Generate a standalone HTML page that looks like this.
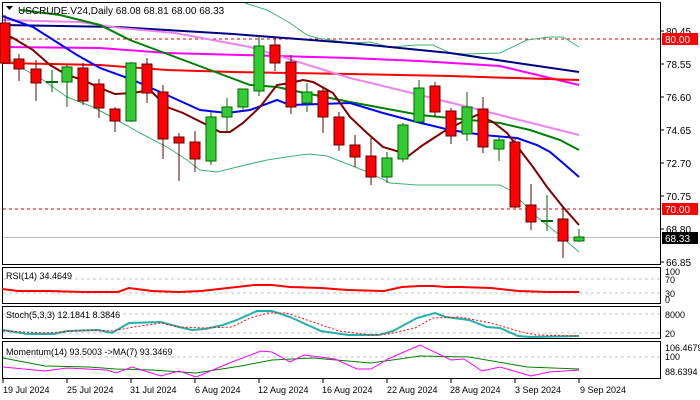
<!DOCTYPE html>
<html><head><meta charset="utf-8"><style>
html,body{margin:0;padding:0;background:#fff;}
svg{display:block;font-family:"Liberation Sans",sans-serif;}
</style></head><body>
<svg width="700" height="400" viewBox="0 0 700 400" xmlns="http://www.w3.org/2000/svg">
<rect width="700" height="400" fill="#fff"/>
<!-- main panel -->
<rect x="2.5" y="2.5" width="658" height="262" fill="none" stroke="#000"/>
<line x1="3" y1="39" x2="660" y2="39" stroke="#d00" stroke-dasharray="3,3"/>
<line x1="3" y1="209" x2="660" y2="209" stroke="#d00" stroke-dasharray="3,3"/>
<line x1="3" y1="237.5" x2="660" y2="237.5" stroke="#c0c0c0"/>
<!-- bollinger -->
<polyline fill="none" stroke="#3cb371" stroke-width="1" points="245,3 267,10 290,23 307,35 317,38 350,43 370,42 390,47 417,45 433,45 450,53 467,54 500,53 527,40 550,37 563,37 579,47"/>
<polyline fill="none" stroke="#3cb371" stroke-width="1" points="3,55 20,67 43,80 67,97 93,107 117,120 140,133 167,147 187,160 200,170 217,172 233,168 267,160 300,155 310,154 327,156 350,165 370,173 390,183 417,185 450,185 500,185 510,190 523,203 537,217 557,233 579,252"/>
<!-- MAs -->
<polyline fill="none" stroke="#000080" stroke-width="2" points="3,25 117,27 233,34 350,43 450,53 517,63 579,72"/>
<polyline fill="none" stroke="#ff00ff" stroke-width="2" points="3,47 100,48 167,53 350,58 420,61 500,66 579,85"/>
<polyline fill="none" stroke="#ff0000" stroke-width="2" points="3,63 100,65 167,70 233,72 350,74 450,76 579,80"/>
<polyline fill="none" stroke="#ee82ee" stroke-width="2" points="3,20 80,22 120,28 175,33 250,47 350,78 420,95 480,110 579,135"/>
<polyline fill="none" stroke="#008000" stroke-width="2" points="20,10 60,15 100,25 130,40 170,55 210,70 250,85 277,87 300,92 350,102 420,115 450,118 500,123 530,130 560,140 579,150"/>
<polyline fill="none" stroke="#0000ff" stroke-width="2" points="2,16 33,27 77,55 100,68 133,80 167,95 200,110 227,113 250,110 277,100 290,105 350,103 383,113 417,122 450,130 483,135 517,138 537,145 550,152 563,163 579,177"/>
<polyline fill="none" stroke="#800000" stroke-width="2" points="3,33 13,38 33,50 50,65 67,75 83,80 100,88 115,94 133,93 150,90 167,107 183,113 207,125 220,132 230,132 243,123 260,107 277,85 290,83 303,80 313,82 333,93 350,117 367,133 383,147 400,152 407,157 423,145 443,132 460,123 477,115 493,122 507,133 520,150 533,167 547,187 563,207 579,225"/>
<!-- candles -->
<g stroke="#600" stroke-width="1">
<line x1="5" y1="15" x2="5" y2="63"/><rect x="0" y="23" width="10" height="40" fill="#f00"/>
<line x1="19" y1="54" x2="19" y2="81"/><rect x="14" y="59" width="10" height="10" fill="#f00"/>
<line x1="36" y1="60" x2="36" y2="101"/><rect x="31" y="69" width="10" height="14" fill="#f00"/>
<line x1="52" y1="70" x2="52" y2="92" stroke="#060"/><line x1="46" y1="82" x2="58" y2="82" stroke="#060" stroke-width="2"/>
<line x1="67" y1="65" x2="67" y2="107" stroke="#060"/><rect x="62" y="67" width="10" height="15" fill="#32cd32" stroke="#060"/>
<line x1="83" y1="63" x2="83" y2="105"/><rect x="78" y="68" width="10" height="33" fill="#f00"/>
<line x1="99" y1="79" x2="99" y2="118"/><rect x="94" y="84" width="10" height="24" fill="#f00"/>
<line x1="115" y1="107" x2="115" y2="132"/><rect x="110" y="109" width="10" height="12" fill="#f00"/>
<line x1="131" y1="62" x2="131" y2="122" stroke="#060"/><rect x="126" y="63" width="10" height="58" fill="#32cd32" stroke="#060"/>
<line x1="147" y1="58" x2="147" y2="103"/><rect x="142" y="64" width="10" height="29" fill="#f00"/>
<line x1="163" y1="85" x2="163" y2="159"/><rect x="158" y="92" width="10" height="47" fill="#f00"/>
<line x1="179" y1="133" x2="179" y2="181"/><rect x="174" y="137" width="10" height="6" fill="#f00"/>
<line x1="195" y1="131" x2="195" y2="172"/><rect x="190" y="142" width="10" height="17" fill="#f00"/>
<line x1="211" y1="112" x2="211" y2="165" stroke="#060"/><rect x="206" y="117" width="10" height="44" fill="#32cd32" stroke="#060"/>
<line x1="227" y1="98" x2="227" y2="132" stroke="#060"/><rect x="222" y="107" width="10" height="10" fill="#32cd32" stroke="#060"/>
<line x1="243" y1="89" x2="243" y2="111" stroke="#060"/><rect x="238" y="89" width="10" height="18" fill="#32cd32" stroke="#060"/>
<line x1="259" y1="36" x2="259" y2="96" stroke="#060"/><rect x="254" y="46" width="10" height="45" fill="#32cd32" stroke="#060"/>
<line x1="275" y1="37" x2="275" y2="71"/><rect x="270" y="45" width="10" height="18" fill="#f00"/>
<line x1="291" y1="55" x2="291" y2="114"/><rect x="286" y="62" width="10" height="45" fill="#f00"/>
<line x1="307" y1="83" x2="307" y2="112" stroke="#060"/><rect x="302" y="92" width="10" height="11" fill="#32cd32" stroke="#060"/>
<line x1="323" y1="88" x2="323" y2="133"/><rect x="318" y="91" width="10" height="26" fill="#f00"/>
<line x1="339" y1="112" x2="339" y2="151"/><rect x="334" y="117" width="10" height="28" fill="#f00"/>
<line x1="355" y1="135" x2="355" y2="167"/><rect x="350" y="145" width="10" height="12" fill="#f00"/>
<line x1="371" y1="138" x2="371" y2="185"/><rect x="366" y="156" width="10" height="21" fill="#f00"/>
<line x1="387" y1="152" x2="387" y2="183" stroke="#060"/><rect x="382" y="158" width="10" height="19" fill="#32cd32" stroke="#060"/>
<line x1="403" y1="123" x2="403" y2="162" stroke="#060"/><rect x="398" y="125" width="10" height="34" fill="#32cd32" stroke="#060"/>
<line x1="419" y1="80" x2="419" y2="122" stroke="#060"/><rect x="414" y="88" width="10" height="34" fill="#32cd32" stroke="#060"/>
<line x1="435" y1="82" x2="435" y2="117"/><rect x="430" y="86" width="10" height="26" fill="#f00"/>
<line x1="451" y1="108" x2="451" y2="144"/><rect x="446" y="111" width="10" height="25" fill="#f00"/>
<line x1="467" y1="92" x2="467" y2="141" stroke="#060"/><rect x="462" y="107" width="10" height="27" fill="#32cd32" stroke="#060"/>
<line x1="483" y1="97" x2="483" y2="153"/><rect x="478" y="109" width="10" height="38" fill="#f00"/>
<line x1="499" y1="137" x2="499" y2="161" stroke="#060"/><rect x="494" y="140" width="10" height="9" fill="#32cd32" stroke="#060"/>
<line x1="515" y1="137" x2="515" y2="208"/><rect x="510" y="142" width="10" height="65" fill="#f00"/>
<line x1="531" y1="184" x2="531" y2="230"/><rect x="526" y="205" width="10" height="17" fill="#f00"/>
<line x1="547" y1="195" x2="547" y2="231" stroke="#060"/><line x1="541" y1="221" x2="553" y2="221" stroke="#060" stroke-width="2"/>
<line x1="563" y1="207" x2="563" y2="258"/><rect x="558" y="219" width="10" height="22" fill="#f00"/>
<line x1="579" y1="229" x2="579" y2="242" stroke="#060"/><rect x="574" y="237" width="10" height="4" fill="#32cd32" stroke="#060"/>
</g>
<!-- title -->
<path d="M6,6 L13,6 L9.5,10 Z" fill="#000"/>
<text x="18" y="14" font-size="10" fill="#000">USCRUDE.V24,Daily  68.08 68.81 68.00 68.33</text>
<!-- price axis -->
<g font-size="10" fill="#000">
<line x1="661" y1="31" x2="664" y2="31" stroke="#000"/><text x="666" y="35">80.45</text>
<line x1="661" y1="64" x2="664" y2="64" stroke="#000"/><text x="666" y="68">78.55</text>
<line x1="661" y1="97" x2="664" y2="97" stroke="#000"/><text x="666" y="101">76.60</text>
<line x1="661" y1="130" x2="664" y2="130" stroke="#000"/><text x="666" y="134">74.65</text>
<line x1="661" y1="163" x2="664" y2="163" stroke="#000"/><text x="666" y="167">72.70</text>
<line x1="661" y1="196" x2="664" y2="196" stroke="#000"/><text x="666" y="200">70.75</text>
<line x1="661" y1="229" x2="664" y2="229" stroke="#000"/><text x="666" y="233">68.80</text>
<line x1="661" y1="262" x2="664" y2="262" stroke="#000"/><text x="666" y="266">66.85</text>
<rect x="662" y="33" width="36" height="12" fill="#f00"/><text x="665" y="43" fill="#fff">80.00</text>
<rect x="662" y="203" width="36" height="12" fill="#f00"/><text x="665" y="213" fill="#fff">70.00</text>
<rect x="662" y="232" width="36" height="12" fill="#000"/><text x="665" y="242" fill="#fff">68.33</text>
</g>
<!-- RSI -->
<rect x="2.5" y="267.5" width="658" height="36" fill="none" stroke="#000"/>
<line x1="3" y1="279" x2="660" y2="279" stroke="#c0c0c0" stroke-dasharray="3,3"/>
<line x1="3" y1="293" x2="660" y2="293" stroke="#c0c0c0" stroke-dasharray="3,3"/>
<polyline fill="none" stroke="#f00" stroke-width="2" points="2,289 18,291 49,291 85,292 118,292 129,288 152,291 179,292 201,291 228,288 254,285 272,285 290,287 321,288 348,290 384,291 402,287 420,286 433,286 446,287 460,287 491,288 518,291 549,292 579,292"/>
<text x="6" y="279" font-size="9">RSI(14) 34.4649</text>
<g font-size="9"><text x="665" y="275">100</text><text x="665" y="283">70</text><text x="665" y="297">30</text><text x="665" y="303">0</text></g>
<!-- Stoch -->
<rect x="2.5" y="306.5" width="658" height="32" fill="none" stroke="#000"/>
<line x1="3" y1="314" x2="660" y2="314" stroke="#c0c0c0" stroke-dasharray="3,3"/>
<line x1="3" y1="333" x2="660" y2="333" stroke="#c0c0c0" stroke-dasharray="3,3"/>
<polyline fill="none" stroke="#20b2aa" stroke-width="2" points="3,330 27,334 54,334 67,331 98,330 112,333 129,323 161,322 179,327 192,330 205,329 223,325 237,320 257,311 272,311 290,317 321,331 348,335 379,335 393,331 417,318 435,313 446,317 469,320 487,327 500,328 518,336 531,337 579,336"/>
<polyline fill="none" stroke="#f00" stroke-width="1" stroke-dasharray="2,2" points="3,331 45,333 89,330 112,331 134,327 161,323 179,327 205,328 232,327 250,318 268,313 286,313 313,322 339,331 371,335 388,334 415,328 433,318 460,317 491,323 518,331 536,335 579,336"/>
<text x="6" y="318" font-size="9">Stoch(5,3,3) 12.1841 8.3846</text>
<g font-size="9"><text x="665" y="318">8000</text><text x="665" y="337">20</text></g>
<!-- Momentum -->
<rect x="2.5" y="341.5" width="658" height="37" fill="none" stroke="#000"/>
<line x1="3" y1="357" x2="660" y2="357" stroke="#c0c0c0" stroke-dasharray="3,3"/>
<polyline fill="none" stroke="#008000" stroke-width="1" points="3,358 45,366 89,367 116,369 152,370 196,373 241,366 272,360 313,358 371,363 420,356 469,357 527,367 579,369"/>
<polyline fill="none" stroke="#ff00ff" stroke-width="1" points="3,367 45,371 67,368 107,370 116,373 132,367 161,376 179,371 196,377 232,362 261,351 272,352 290,362 304,355 335,359 357,369 371,369 388,359 420,345 451,360 464,359 482,371 500,367 531,376 549,372 579,370"/>
<text x="6" y="355" font-size="9">Momentum(14) 93.5003  -&gt;MA(7) 93.3469</text>
<g font-size="9"><text x="665" y="351">106.4679</text><text x="665" y="360">100</text><text x="665" y="375">88.6394</text></g>
<!-- dates -->
<g stroke="#000"><line x1="3" y1="379" x2="3" y2="383"/><line x1="67" y1="379" x2="67" y2="383"/><line x1="131" y1="379" x2="131" y2="383"/><line x1="195" y1="379" x2="195" y2="383"/><line x1="259" y1="379" x2="259" y2="383"/><line x1="323" y1="379" x2="323" y2="383"/><line x1="387" y1="379" x2="387" y2="383"/><line x1="451" y1="379" x2="451" y2="383"/><line x1="515" y1="379" x2="515" y2="383"/><line x1="579" y1="379" x2="579" y2="383"/></g>
<g font-size="9"><text x="3" y="393">19 Jul 2024</text><text x="67" y="393">25 Jul 2024</text><text x="130" y="393">31 Jul 2024</text><text x="195" y="393">6 Aug 2024</text><text x="258" y="393">12 Aug 2024</text><text x="322" y="393">16 Aug 2024</text><text x="387" y="393">22 Aug 2024</text><text x="450" y="393">28 Aug 2024</text><text x="515" y="393">3 Sep 2024</text><text x="580" y="393">9 Sep 2024</text></g>
</svg>
</body></html>
